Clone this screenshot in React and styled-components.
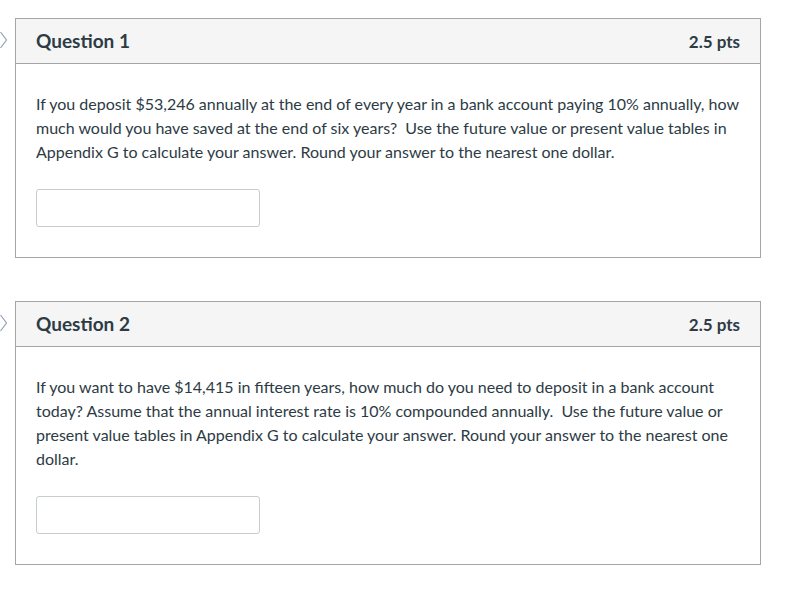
import React from 'react';
import styled, { createGlobalStyle } from 'styled-components';

const GlobalStyle = createGlobalStyle`
    body {
        margin: 0;
        background: #ffffff;
        font-family: Lato, "Liberation Sans", sans-serif;
        color: #2d3b45;
    }
`;

const Page = styled.div`
    display: flex;
    flex-direction: column;
    gap: 43px;
    padding: 18px 0 0 15px;
    width: 746px;
`;

const QuestionWrap = styled.div`
    position: relative;
`;

const Marker = styled.svg`
    position: absolute;
    left: -16px;
    top: 13px;
`;

const Card = styled.div`
    border: 1px solid #a5a5a5;
    background: #ffffff;
`;

const Header = styled.div`
    display: flex;
    justify-content: space-between;
    align-items: center;
    height: 44px;
    padding: 0 20px;
    background: #f5f5f5;
    border-bottom: 1px solid #a5a5a5;
`;

const Title = styled.div`
    font-size: 19px;
    font-weight: 700;
    color: #2d3b45;
    margin-top: -2px;
`;

const Points = styled.div`
    font-size: 17px;
    font-weight: 700;
    color: #2d3b45;
`;

const Body = styled.div`
    padding: 28px 19px 30px 20px;
`;

const Text = styled.p`
    margin: 0 0 25px;
    font-size: 16px;
    line-height: 24px;
    color: #2d3b45;
`;

const Answer = styled.input`
    display: block;
    box-sizing: border-box;
    width: 224px;
    height: 38px;
    margin: 0;
    border: 1px solid #c7cdd1;
    border-radius: 3px;
    background: #ffffff;
    outline: none;
`;

const questions = [
    {
        id: 1,
        pts: '2.5 pts',
        text: 'If you deposit $53,246 annually at the end of every year in a bank account paying 10% annually, how much would you have saved at the end of six years?\u00a0 Use the future value or present value tables in Appendix G to calculate your answer. Round your answer to the nearest one dollar.',
    },
    {
        id: 2,
        pts: '2.5 pts',
        text: 'If you want to have $14,415 in fifteen years, how much do you need to deposit in a bank account today? Assume that the annual interest rate is 10% compounded annually.\u00a0 Use the future value or present value tables in Appendix G to calculate your answer. Round your answer to the nearest one dollar.',
    },
];

const Question = ({ id, pts, text }) => (
    <QuestionWrap>
        <Marker width="10" height="18" viewBox="0 0 10 18">
            <path d="M1.5 1 L7.5 9 L1.5 17" fill="none" stroke="#8ea2b2" strokeWidth="1.2" />
        </Marker>
        <Card>
            <Header>
                <Title>Question {id}</Title>
                <Points>{pts}</Points>
            </Header>
            <Body>
                <Text>{text}</Text>
                <Answer type="text" />
            </Body>
        </Card>
    </QuestionWrap>
);

const App = () => (
    <>
        <GlobalStyle />
        <Page>
            {questions.map((q) => (
                <Question key={q.id} {...q} />
            ))}
        </Page>
    </>
);

export default App;
